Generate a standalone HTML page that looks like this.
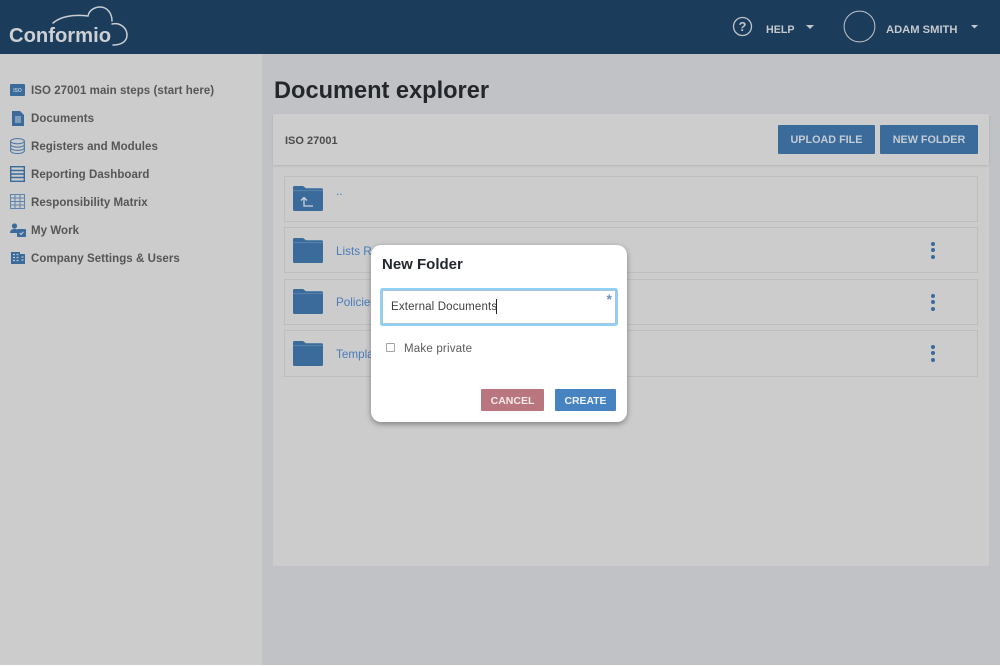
<!DOCTYPE html>
<html><head><meta charset="utf-8">
<style>
html,body{margin:0;padding:0;width:1000px;height:666px;overflow:hidden;background:#fff}
body{position:relative;font-family:"Liberation Sans",sans-serif}
.a{position:absolute;white-space:nowrap}
.nav{left:31px;font-size:11.5px;font-weight:700;color:#565656;line-height:16px;letter-spacing:.05px}
.row{position:absolute;left:284px;width:692px;border:1px solid #bebebe}
.lnk{left:336px;font-size:11.7px;color:#4a7cb8;line-height:16px}
.btn{position:absolute;top:125px;height:29px;background:#3a6b9b;border-radius:1px;color:#c4ccd5;font-size:10.8px;font-weight:700;text-align:center;line-height:31px}
.dots{position:absolute;left:930.5px;width:4px}
.dots i{display:block;width:4px;height:4px;border-radius:50%;background:#3a6b9b;margin-bottom:2.4px}
svg{position:absolute;display:block}
</style></head><body>
<div class="a" style="left:0;top:54px;width:1000px;height:611px;background:#c1c2c6"></div>
<div class="a" style="left:0;top:0;width:1000px;height:54px;background:#1c3c5b"></div>
<div class="a" style="left:0;top:54px;width:262px;height:611px;background:#cccccc"></div>

<!-- logo -->
<svg style="left:0;top:0" width="140" height="54" viewBox="0 0 140 54" fill="none" stroke="#c9cdd1" stroke-width="1.5" stroke-linecap="round">
<path d="M53 23C60 17 72 14 88 16C89 10 95 7 100 7C107 7 112 13 112 21" />
<path d="M112 24C120 22 127 28 127 35C127 41 122 45 113 45" />
</svg>
<div class="a" style="left:9px;top:24px;font-size:20.2px;font-weight:700;color:#ccd0d4;line-height:24px">Conformio</div>

<!-- header right -->
<svg style="left:732px;top:16px" width="21" height="21" viewBox="0 0 21 21"><circle cx="10.5" cy="10.5" r="9" fill="none" stroke="#bfc4ca" stroke-width="1.3"/></svg>
<div class="a" style="left:732px;top:16px;width:21px;text-align:center;font-size:13px;font-weight:700;color:#bfc4ca;line-height:21px">?</div>
<div class="a" style="left:766px;top:21.5px;font-size:10.7px;font-weight:700;color:#c4c9ce;line-height:16px">HELP</div>
<svg style="left:806px;top:25px" width="8" height="4"><path d="M0 0H8L4 4Z" fill="#c4c9ce"/></svg>
<svg style="left:843px;top:10px" width="33" height="33"><circle cx="16.5" cy="16.5" r="15.4" fill="none" stroke="#bfc4ca" stroke-width="1"/></svg>
<div class="a" style="left:886px;top:21.5px;font-size:11.2px;font-weight:700;color:#c4c9ce;line-height:16px">ADAM SMITH</div>
<svg style="left:971px;top:25px" width="7" height="4"><path d="M0 0H7L3.500 3.500Z" fill="#c4c9ce"/></svg>

<!-- sidebar -->
<svg style="left:10px;top:84px" width="15" height="12"><rect width="15" height="12" rx="1" fill="#3a6b9b"/><text x="7.5" y="8" font-size="5" font-weight="700" text-anchor="middle" fill="#b4c4d4" font-family="Liberation Sans, sans-serif">ISO</text></svg>
<div class="a nav" style="top:83px">ISO 27001 main steps (start here)</div>
<svg style="left:12px;top:111px" width="12" height="15"><path d="M0 0H8L12 4V15H0Z" fill="#3a6b9b"/><rect x="3" y="5" width="6" height="7" fill="#7f9cb9"/></svg>
<div class="a nav" style="top:111px">Documents</div>
<svg style="left:10px;top:138px" width="15" height="16" viewBox="0 0 15 16" fill="none" stroke="#4f7ba7" stroke-width="1.1"><ellipse cx="7.500" cy="3.200" rx="6.900" ry="2.600"/><path d="M.6 3.200V12.800C.6 14.300 3.600 15.500 7.500 15.500S14.400 14.300 14.400 12.800V3.200M.6 6.500C.6 8 3.600 9.200 7.500 9.200S14.400 8 14.400 6.500M.6 9.700C.6 11.200 3.600 12.400 7.500 12.400S14.400 11.200 14.400 9.700"/></svg>
<div class="a nav" style="top:139px">Registers and Modules</div>
<svg style="left:10px;top:166px" width="15" height="16" viewBox="0 0 15 16" fill="none" stroke="#3a6b9b" stroke-width="1.4"><rect x=".7" y=".7" width="13.6" height="14.6"/><path d="M1 4.500H14M1 8H14M1 11.500H14"/></svg>
<div class="a nav" style="top:167px">Reporting Dashboard</div>
<svg style="left:10px;top:194px" width="15" height="15" viewBox="0 0 15 15" fill="none" stroke="#5d86ae" stroke-width="1"><rect x=".5" y=".5" width="14" height="14"/><path d="M5 1V14M10 1V14M1 4H14M1 7.500H14M1 11H14"/></svg>
<div class="a nav" style="top:195px">Responsibility Matrix</div>
<svg style="left:10px;top:223px" width="16" height="14" viewBox="0 0 16 14"><circle cx="4.500" cy="3" r="2.600" fill="#3a6b9b"/><path d="M0 10C0 7 2 6 4.500 6S8 7 8 8V10Z" fill="#3a6b9b"/><rect x="7" y="6" width="9" height="8" rx="1" fill="#3a6b9b"/><path d="M9.500 10L11 11.500L13.500 8.800" stroke="#c6d0da" fill="none" stroke-width="1"/></svg>
<div class="a nav" style="top:223px">My Work</div>
<svg style="left:11px;top:252px" width="14" height="12" viewBox="0 0 14 12"><rect width="9" height="12" fill="#3a6b9b"/><rect x="9" y="2" width="5" height="10" fill="#3a6b9b"/><path d="M2 2.500H4M5.500 2.500H7.500M2 5.500H4M5.500 5.500H7.500M2 8.500H4M5.500 8.500H7.500M10.500 5H12.500M10.500 8H12.500" stroke="#bcc8d4" stroke-width="1.200"/></svg>
<div class="a nav" style="top:251px">Company Settings &amp; Users</div>

<!-- main -->
<div class="a" style="left:274px;top:77px;font-size:23.6px;font-weight:700;color:#23272b;line-height:29px">Document explorer</div>
<div class="a" style="left:273px;top:114px;width:716px;height:452px;background:#cccccc"></div>
<div class="a" style="left:273px;top:114px;width:716px;height:51px;background:#cdcdcd;box-shadow:0 1px 2px rgba(0,0,0,.12)"></div>
<div class="a" style="left:285px;top:133px;font-size:11px;font-weight:700;color:#4c4c4c;line-height:16px">ISO 27001</div>
<div class="btn" style="left:778px;width:97px">UPLOAD FILE</div>
<div class="btn" style="left:880px;width:98px">NEW FOLDER</div>

<div class="row" style="top:176px;height:44px"></div>
<div class="row" style="top:227px;height:44px"></div>
<div class="row" style="top:279px;height:44px"></div>
<div class="row" style="top:330px;height:45px"></div>

<svg style="left:293px;top:186px" width="30" height="25" viewBox="0 0 30 25"><path d="M1.500 0H10L13 2.200H28.500Q30 2.200 30 3.700V23.500Q30 25 28.500 25H1.500Q0 25 0 23.500V1.500Q0 0 1.500 0Z" fill="#3a6b9b"/><path d="M0 4.800H30" stroke="#7c9cbc" stroke-width=".5"/><path d="M11 11.500V20H20M8 14.500L11 11.500L14 14.500" fill="none" stroke="#ccd3da" stroke-width="1.300"/></svg>
<svg style="left:293px;top:238px" width="30" height="25" viewBox="0 0 30 25"><path d="M1.500 0H10L13 2.200H28.500Q30 2.200 30 3.700V23.500Q30 25 28.500 25H1.500Q0 25 0 23.500V1.500Q0 0 1.500 0Z" fill="#3a6b9b"/><path d="M0 4.800H30" stroke="#7c9cbc" stroke-width=".5"/></svg>
<svg style="left:293px;top:289px" width="30" height="25" viewBox="0 0 30 25"><path d="M1.500 0H10L13 2.200H28.500Q30 2.200 30 3.700V23.500Q30 25 28.500 25H1.500Q0 25 0 23.500V1.500Q0 0 1.500 0Z" fill="#3a6b9b"/><path d="M0 4.800H30" stroke="#7c9cbc" stroke-width=".5"/></svg>
<svg style="left:293px;top:341px" width="30" height="25" viewBox="0 0 30 25"><path d="M1.500 0H10L13 2.200H28.500Q30 2.200 30 3.700V23.500Q30 25 28.500 25H1.500Q0 25 0 23.500V1.500Q0 0 1.500 0Z" fill="#3a6b9b"/><path d="M0 4.800H30" stroke="#7c9cbc" stroke-width=".5"/></svg>

<div class="a lnk" style="top:184px">..</div>
<div class="a lnk" style="top:244px">Lists Re</div>
<div class="a lnk" style="top:295px">Policies</div>
<div class="a lnk" style="top:347px">Templa</div>

<div class="dots" style="top:242px"><i></i><i></i><i></i></div>
<div class="dots" style="top:294px"><i></i><i></i><i></i></div>
<div class="dots" style="top:345px"><i></i><i></i><i></i></div>

<!-- modal -->
<div class="a" style="left:371px;top:245px;width:256px;height:177px;background:#fff;border-radius:10px;box-shadow:0 2px 6px rgba(0,0,0,.38)"></div>
<div class="a" style="left:382px;top:256px;font-size:15px;font-weight:700;color:#24282c;line-height:18px">New Folder</div>
<div class="a" style="left:382px;top:290px;width:232px;height:32px;border:1px solid #a9c4d6;box-shadow:0 0 0 2px #8fd0f5;border-radius:1px;background:#fff"></div>
<div class="a" style="left:391px;top:299px;font-size:11.5px;color:#3f3f3f;line-height:16px;letter-spacing:.15px">External Documents</div>
<div class="a" style="left:496px;top:299px;width:1px;height:15px;background:#222"></div>
<div class="a" style="left:606.5px;top:291px;font-size:14px;font-weight:700;color:#6d94bd;line-height:16px">*</div>
<div class="a" style="left:386px;top:343px;width:7px;height:7px;border:1px solid #a6a6a6;border-radius:1px;background:#fff"></div>
<div class="a" style="left:404px;top:341px;font-size:11.5px;color:#5b5b5b;line-height:16px;letter-spacing:.2px">Make private</div>
<div class="a" style="left:481px;top:389px;width:63px;height:22px;background:#b9767e;border-radius:1px;color:#f5e9ea;font-size:10.5px;font-weight:700;text-align:center;line-height:25px">CANCEL</div>
<div class="a" style="left:555px;top:389px;width:61px;height:22px;background:#4883c1;border-radius:1px;color:#eef4fa;font-size:10.4px;font-weight:700;text-align:center;line-height:25px">CREATE</div>
</body></html>
